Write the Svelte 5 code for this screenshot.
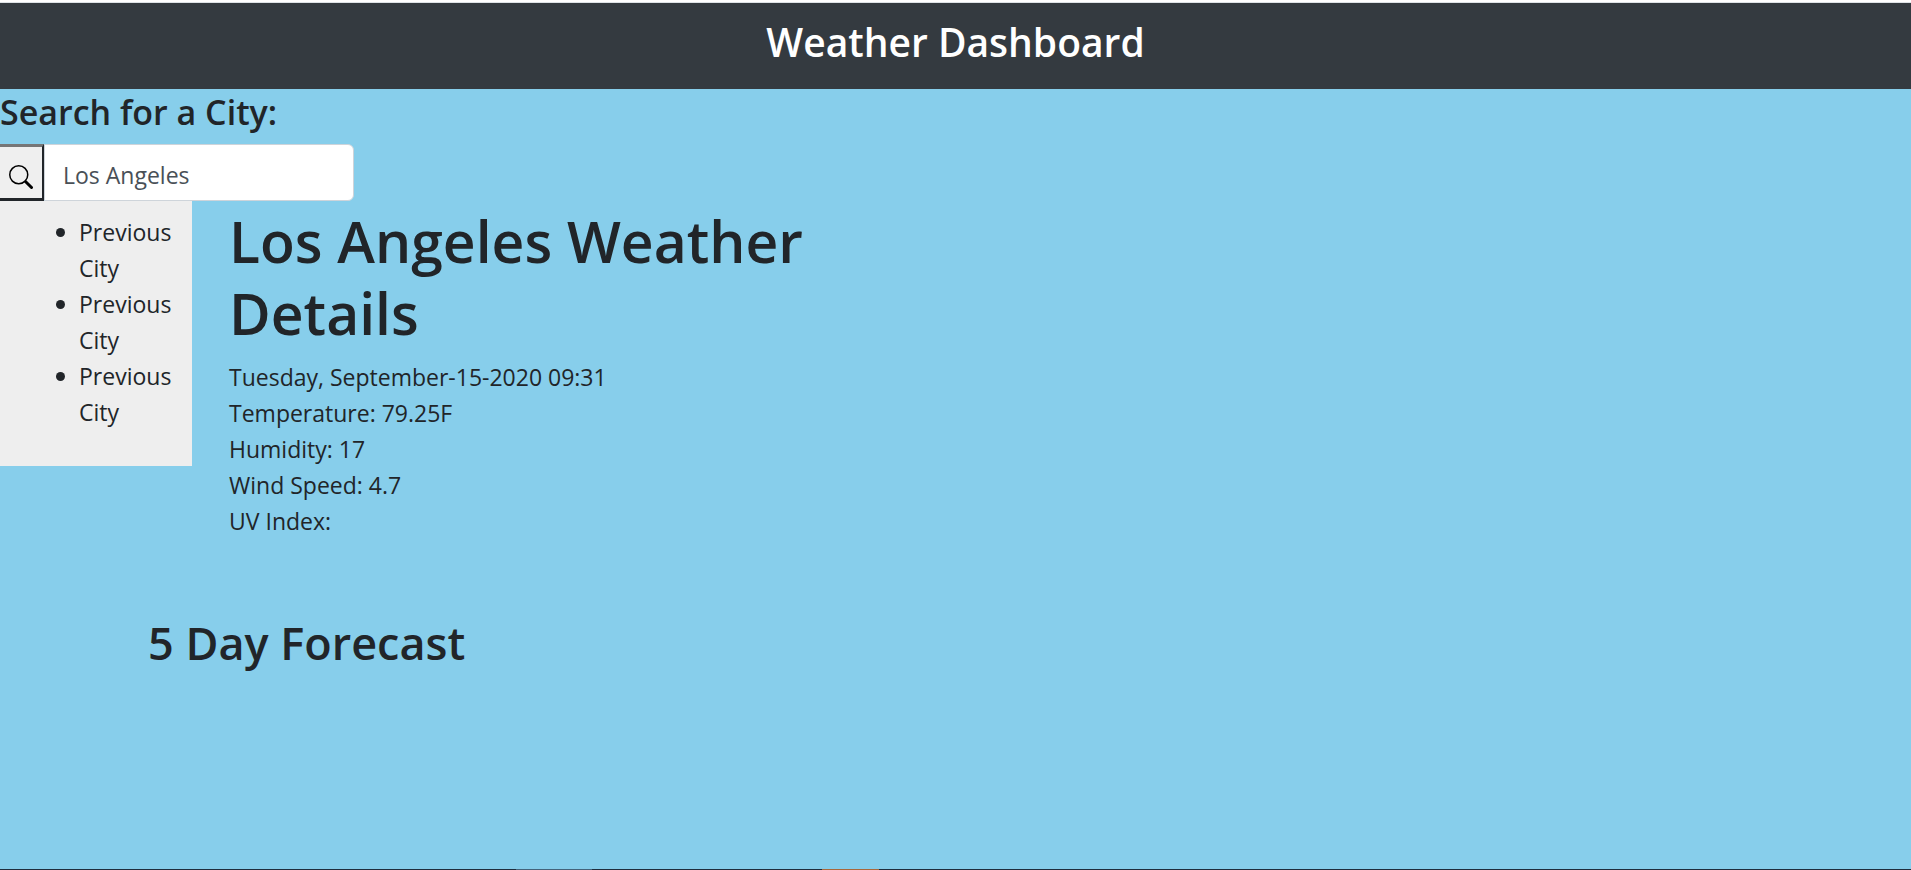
<script>
  let city = $state('');
  const previous = ['Previous City', 'Previous City', 'Previous City'];
  const details = [
    'Tuesday, September-15-2020 09:31',
    'Temperature: 79.25F',
    'Humidity: 17',
    'Wind Speed: 4.7',
    'UV Index:'
  ];
</script>

<div class="page">
  <header>
    <h3>Weather Dashboard</h3>
  </header>

  <main>
    <h4><label for="city">Search for a City:</label></h4>
    <form class="search" onsubmit={(e) => e.preventDefault()}>
      <button type="submit" aria-label="Search">
        <svg viewBox="0 0 16 16" width="24" height="24" fill="currentColor" aria-hidden="true">
          <path fill-rule="evenodd" d="M10.442 10.442a1 1 0 0 1 1.415 0l3.85 3.85a1 1 0 0 1-1.414 1.415l-3.85-3.85a1 1 0 0 1 0-1.415z" />
          <path fill-rule="evenodd" d="M6.5 12a5.5 5.5 0 1 0 0-11 5.5 5.5 0 0 0 0 11zM13 6.5a6.5 6.5 0 1 1-13 0 6.5 6.5 0 0 1 13 0z" />
        </svg>
      </button>
      <input id="city" type="text" placeholder="Los Angeles" bind:value={city} />
    </form>

    <div class="columns">
      <aside>
        <ul>
          {#each previous as name}
            <li>{name}</li>
          {/each}
        </ul>
      </aside>
      <section class="weather">
        <h1>Los Angeles Weather Details</h1>
        {#each details as line}
          <p>{line}</p>
        {/each}
      </section>
    </div>

    <section class="forecast">
      <h2>5 Day Forecast</h2>
    </section>
  </main>

  <footer></footer>
</div>

<style>
  :global(body) {
    background: #87ceeb;
  }

  .page {
    display: flex;
    flex-direction: column;
    min-height: 100vh;
    box-sizing: border-box;
    border-top: 2px solid #fff;
    background: #87ceeb;
    color: #212529;
    font-family: 'Segoe UI', 'Open Sans', 'Noto Sans', sans-serif;
    font-size: 23px;
    line-height: 36px;
  }

  h1, h2, h3, h4, p, ul {
    margin: 0;
  }

  h1, h2, h3, h4 {
    font-weight: 600;
  }

  header {
    padding: 14px 0 22px;
    border-top: 1px solid #dee2e6;
    background: #343a40;
    color: #fff;
    text-align: center;
  }

  h3 {
    font-size: 39px;
    line-height: 50px;
  }

  main {
    flex: 1;
  }

  h4 {
    margin: 2px 0 11px;
    font-size: 34px;
    line-height: 42px;
  }

  .search {
    display: flex;
    width: 354px;
    height: 57px;
  }

  button {
    width: 44px;
    padding: 8px 0 0 9px;
    border: 3px solid #212529;
    border-top-color: #767676;
    border-width: 3px 2px 3px 0;
    background: #efefef;
    color: #000;
    text-align: left;
  }

  button svg {
    display: block;
  }

  input {
    flex: 1;
    min-width: 0;
    padding: 5px 18px 0;
    border: 1px solid #ced4da;
    border-radius: 0 6px 6px 0;
    background: #fff;
    color: #495057;
    font: inherit;
  }

  input::placeholder {
    color: #495057;
    opacity: 1;
  }

  .columns {
    display: flex;
    align-items: flex-start;
  }

  aside {
    flex: none;
    width: 192px;
    box-sizing: border-box;
    padding: 13px 16px 36px 56px;
    background: #eee;
  }

  ul {
    padding: 0;
    list-style: none;
  }

  li {
    display: flex;
    gap: 14px;
  }

  li::before {
    content: '';
    flex: none;
    width: 9px;
    height: 9px;
    margin-top: 14px;
    border-radius: 50%;
    background: #212529;
  }

  .weather {
    width: 36%;
    padding: 4px 0 0 37px;
  }

  h1 {
    margin-bottom: 10px;
    font-size: 57px;
    line-height: 72px;
  }

  .forecast {
    padding: 75px 0 0 148px;
  }

  h2 {
    font-size: 45px;
    line-height: 58px;
  }

  footer {
    height: 1px;
    background: linear-gradient(
      to right,
      #1f2d3d 27%, #44637a 27% 31%,
      #1f2d3d 31% 43%, #a8683c 43% 46%,
      #1f2d3d 46%
    );
  }
</style>
